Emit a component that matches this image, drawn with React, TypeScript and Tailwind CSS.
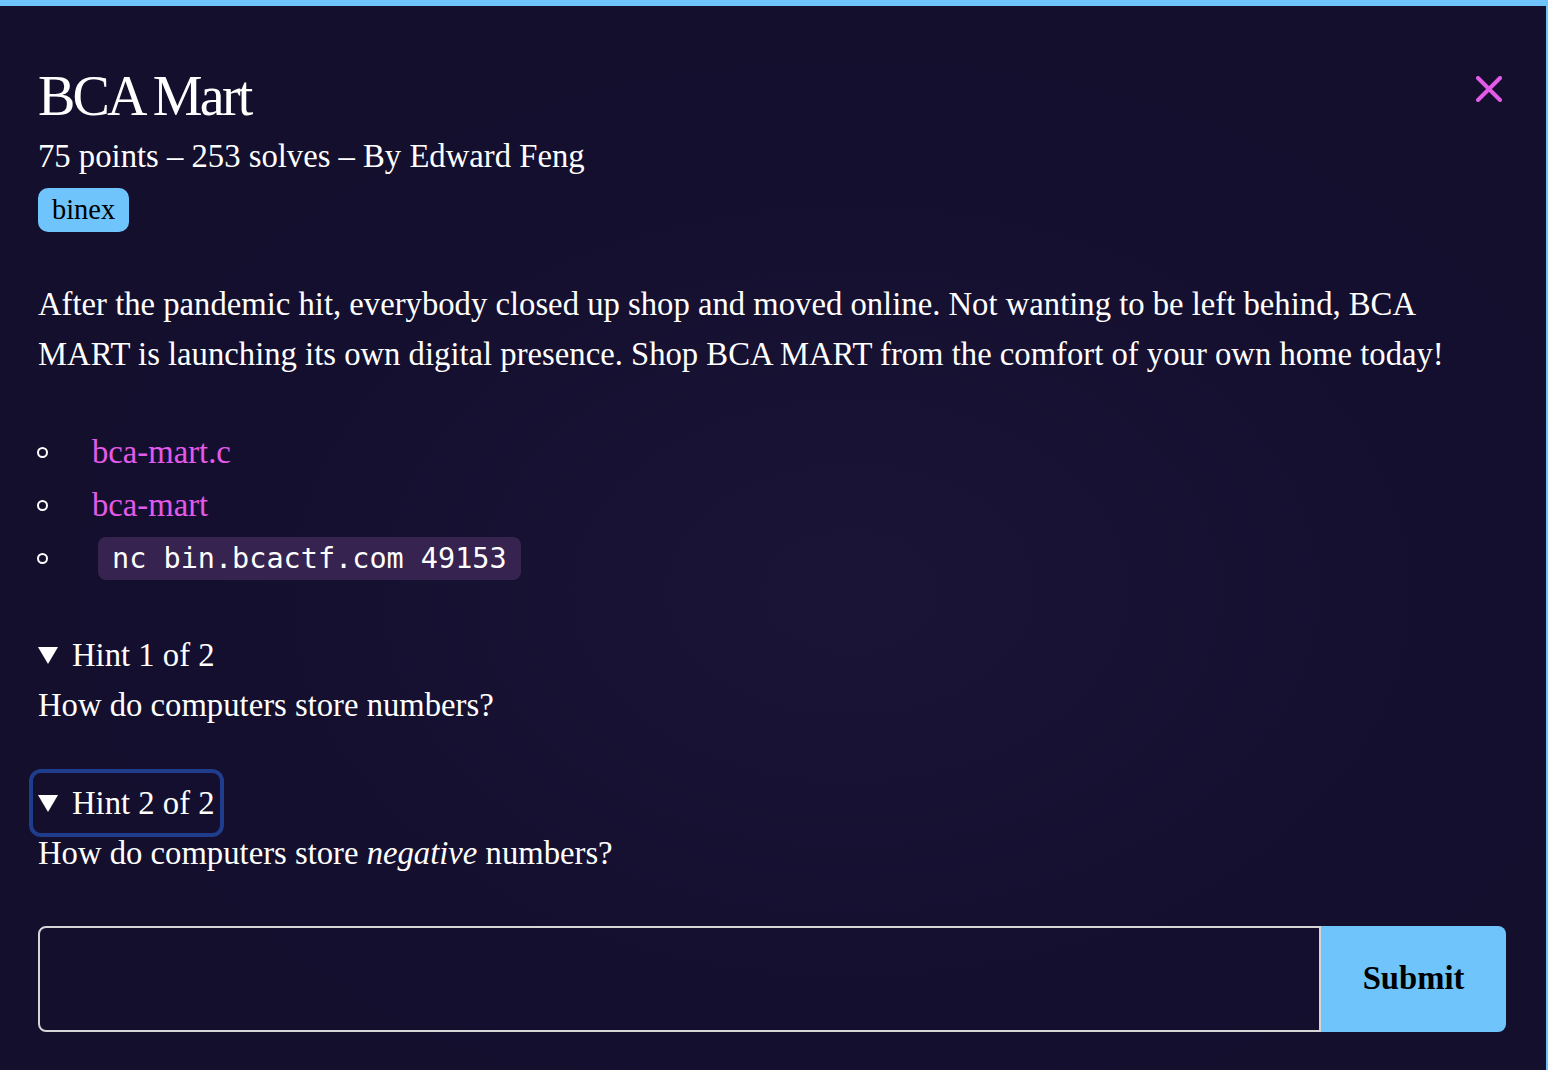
import React from "react";

const serif = "font-['Liberation_Serif','Times_New_Roman',serif]";

const Bullet: React.FC = () => (
  <span className="mr-[44px] ml-[37px] inline-block h-[11px] w-[11px] shrink-0 rounded-full border-[2px] border-white" />
);

const Triangle: React.FC = () => (
  <svg width="20" height="17" viewBox="0 0 20 17" className="mr-[14px] shrink-0">
    <path d="M0 0 L20 0 L10 17 Z" fill="white" />
  </svg>
);

const CloseIcon: React.FC = () => (
  <svg width="26" height="26" viewBox="0 0 26 26" fill="none">
    <path d="M2 2 L24 24 M24 2 L2 24" stroke="#e35ae8" strokeWidth="4" strokeLinecap="round" />
  </svg>
);

const App: React.FC = () => {
  return (
    <div
      className={`min-h-[1070px] w-full overflow-hidden border-t-[6px] border-r-[2px] border-[#6ec4fb] bg-[#130f2c] bg-[radial-gradient(ellipse_at_55%_55%,#1a1536_0%,#150f30_45%,#130f2c_75%)] text-white ${serif}`}
    >
      <div className="relative pl-[38px] pr-[40px] pt-[62px]">
        {/* Close */}
        <button className="absolute right-[44px] top-[70px]">
          <CloseIcon />
        </button>

        {/* Header */}
        <h1 className="text-[56px] leading-[56px] tracking-[-0.05em]">BCA Mart</h1>
        <p className="mt-[12px] text-[32.7px] leading-[40px]">
          75 points – 253 solves – By Edward Feng
        </p>
        <span className="mt-[12px] inline-block rounded-[10px] bg-[#6ec4fb] px-[14px] text-[28.4px] leading-[44px] text-black">
          binex
        </span>

        {/* Description */}
        <p className="mt-[47px] text-[32.7px] leading-[50px]">
          After the pandemic hit, everybody closed up shop and moved online. Not wanting to be left behind, BCA
          MART is launching its own digital presence. Shop BCA MART from the comfort of your own home today!
        </p>

        {/* Files */}
        <ul className="-ml-[38px] mt-[47px] text-[32.7px]">
          <li className="flex h-[53px] items-center">
            <Bullet />
            <a href="#" className="leading-[53px] text-[#e35ae8]">bca-mart.c</a>
          </li>
          <li className="flex h-[53px] items-center">
            <Bullet />
            <a href="#" className="leading-[53px] text-[#e35ae8]">bca-mart</a>
          </li>
          <li className="flex h-[53px] items-center">
            <Bullet />
            <code className="ml-[6px] rounded-[8px] bg-[#36234f] px-[14px] font-['DejaVu_Sans_Mono',monospace] text-[28.5px] leading-[43px]">
              nc bin.bcactf.com 49153
            </code>
          </li>
        </ul>

        {/* Hints */}
        <div className="mt-[45px] text-[32.7px] leading-[50px]">
          <div className="flex w-fit items-center">
            <Triangle />
            Hint 1 of 2
          </div>
          <p>How do computers store numbers?</p>
        </div>

        <div className="mt-[48px] text-[32.7px] leading-[50px]">
          <div className="flex w-fit items-center rounded-[3px] outline-[4px] outline-offset-[5px] outline-[#1f3d8c] outline-solid">
            <Triangle />
            Hint 2 of 2
          </div>
          <p>
            How do computers store <em>negative</em> numbers?
          </p>
        </div>

        {/* Flag input */}
        <div className="mt-[48px] flex h-[106px]">
          <input
            type="text"
            className="flex-1 rounded-l-[8px] border-[2px] border-[#d6d6d6] bg-transparent px-4 text-[32px] text-white outline-none"
          />
          <button className="w-[185px] rounded-r-[8px] bg-[#6ec4fb] text-[32.7px] font-bold text-black">
            Submit
          </button>
        </div>
      </div>
    </div>
  );
};

export default App;
